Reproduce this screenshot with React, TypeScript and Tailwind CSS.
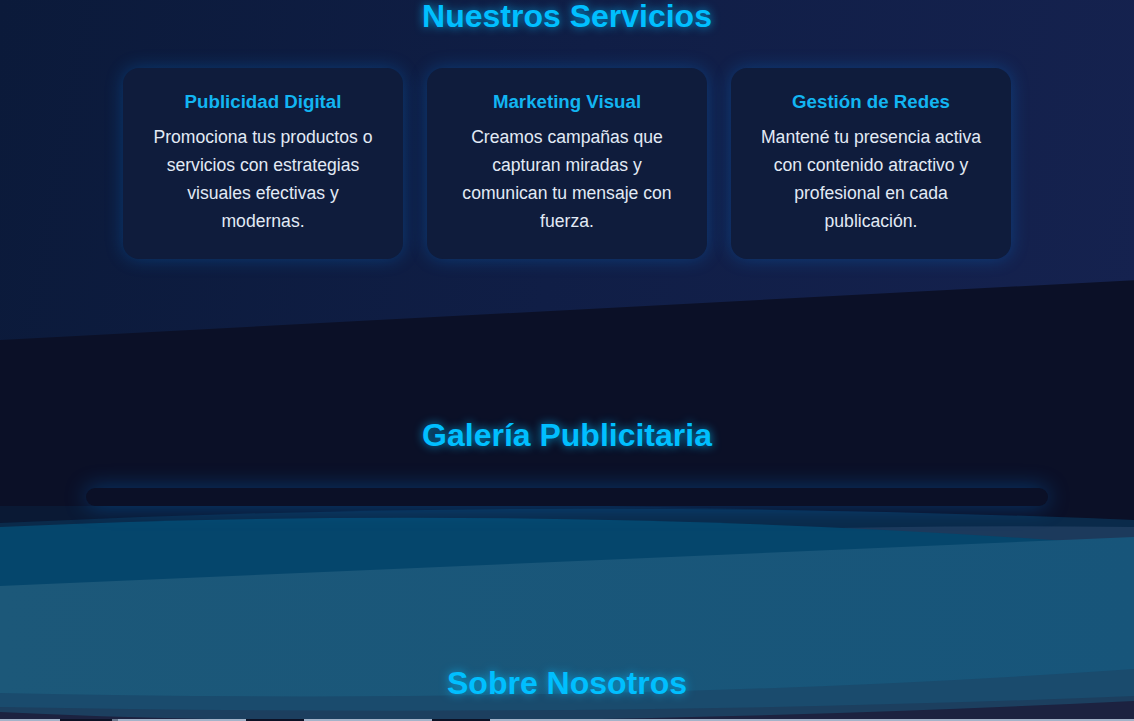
const services = [
  {
    title: 'Publicidad Digital',
    text: 'Promociona tus productos o servicios con estrategias visuales efectivas y modernas.',
  },
  {
    title: 'Marketing Visual',
    text: 'Creamos campañas que capturan miradas y comunican tu mensaje con fuerza.',
  },
  {
    title: 'Gestión de Redes',
    text: 'Mantené tu presencia activa con contenido atractivo y profesional en cada publicación.',
  },
];

function SectionTitle({ children, tight }: { children: string; tight?: boolean }) {
  return (
    <h2
      className={
        tight
          ? 'text-center text-[32px] font-bold leading-[32px] text-[#00bfff] [text-shadow:0_0_10px_rgba(0,191,255,0.75)]'
          : 'text-center text-[32px] font-bold leading-[38px] text-[#00bfff] [text-shadow:0_0_10px_rgba(0,191,255,0.75)]'
      }
    >
      {children}
    </h2>
  );
}

function Waves() {
  return (
    <svg
      className="absolute inset-0 h-full w-full"
      viewBox="0 0 1134 213"
      preserveAspectRatio="none"
      aria-hidden="true"
    >
      <defs>
        <linearGradient id="light" x1="0" y1="0" x2="1" y2="0">
          <stop offset="0%" stopColor="#1c5879" />
          <stop offset="100%" stopColor="#17557a" />
        </linearGradient>
      </defs>
      <path d="M0,-3 Q500,-8 1134,14 L1134,213 L0,213 Z" fill="#0a1934" />
      <path d="M0,17 Q560,-10 1134,14 L1134,213 L0,213 Z" fill="#0a2a4a" />
      <path d="M700,26 Q900,18 1134,21 L1134,213 L700,213 Z" fill="#1c3a5c" />
      <path d="M0,21 Q560,-4.5 1134,40 L1134,213 L0,213 Z" fill="#05466c" />
      <path d="M0,80 L1134,31 L1134,213 L0,213 Z" fill="url(#light)" />
      <path d="M0,187 Q600,200 1134,163 L1134,213 L0,213 Z" fill="#1a4b6d" />
      <path d="M0,201 Q600,212 1134,190 L1134,213 L0,213 Z" fill="#1c3f5f" />
      <path d="M0,206 Q450,228 1134,195 L1134,213 L0,213 Z" fill="#1c2240" />
    </svg>
  );
}

export default function App() {
  return (
    <div className="min-h-screen overflow-hidden bg-[#0b1027] font-['Liberation_Sans',Arial,sans-serif]">
      {/* servicios */}
      <section className="bg-[linear-gradient(100deg,#0b1a3a_0%,#101e46_50%,#15224f_100%)] pb-[81px] [clip-path:polygon(0_0,100%_0,100%_82.4%,0_100%)]">
        <SectionTitle tight>Nuestros Servicios</SectionTitle>
        <div className="mt-9 flex justify-center gap-6">
          {services.map((s) => (
            <div
              key={s.title}
              className="w-[280px] rounded-2xl bg-[#0f1c3c] px-6 pb-6 pt-5 text-center shadow-[0_0_18px_rgba(0,140,255,0.28)]"
            >
              <h3 className="mb-[7px] text-[18.7px] font-bold leading-7 text-[#12b5f2]">{s.title}</h3>
              <p className="text-[17.6px] leading-7 text-[#e2eaf5]">{s.text}</p>
            </div>
          ))}
        </div>
      </section>

      {/* galeria */}
      <section className="pt-[76px]">
        <SectionTitle>Galería Publicitaria</SectionTitle>
        <div className="relative z-10 mx-auto mt-[34px] h-[18px] w-[962px] rounded-full bg-[#0b1027] shadow-[0_0_22px_rgba(0,140,255,0.35)]" />
      </section>

      {/* sobre nosotros */}
      <section className="relative pb-[17px] pt-[158px]">
        <Waves />
        <div className="relative">
          <SectionTitle>Sobre Nosotros</SectionTitle>
        </div>
      </section>

      <div className="flex h-[2px]">
        <div className="w-[60px] bg-[#a3b3c9]" />
        <div className="w-[52px] bg-[#0d1226]" />
        <div className="w-[6px] bg-[#6b7a90]" />
        <div className="w-[128px] bg-[#a3b3c9]" />
        <div className="w-[58px] bg-[#0d1226]" />
        <div className="w-[128px] bg-[#a3b3c9]" />
        <div className="w-[58px] bg-[#0d1226]" />
        <div className="flex-1 bg-[#a3b3c9]" />
      </div>
    </div>
  );
}
